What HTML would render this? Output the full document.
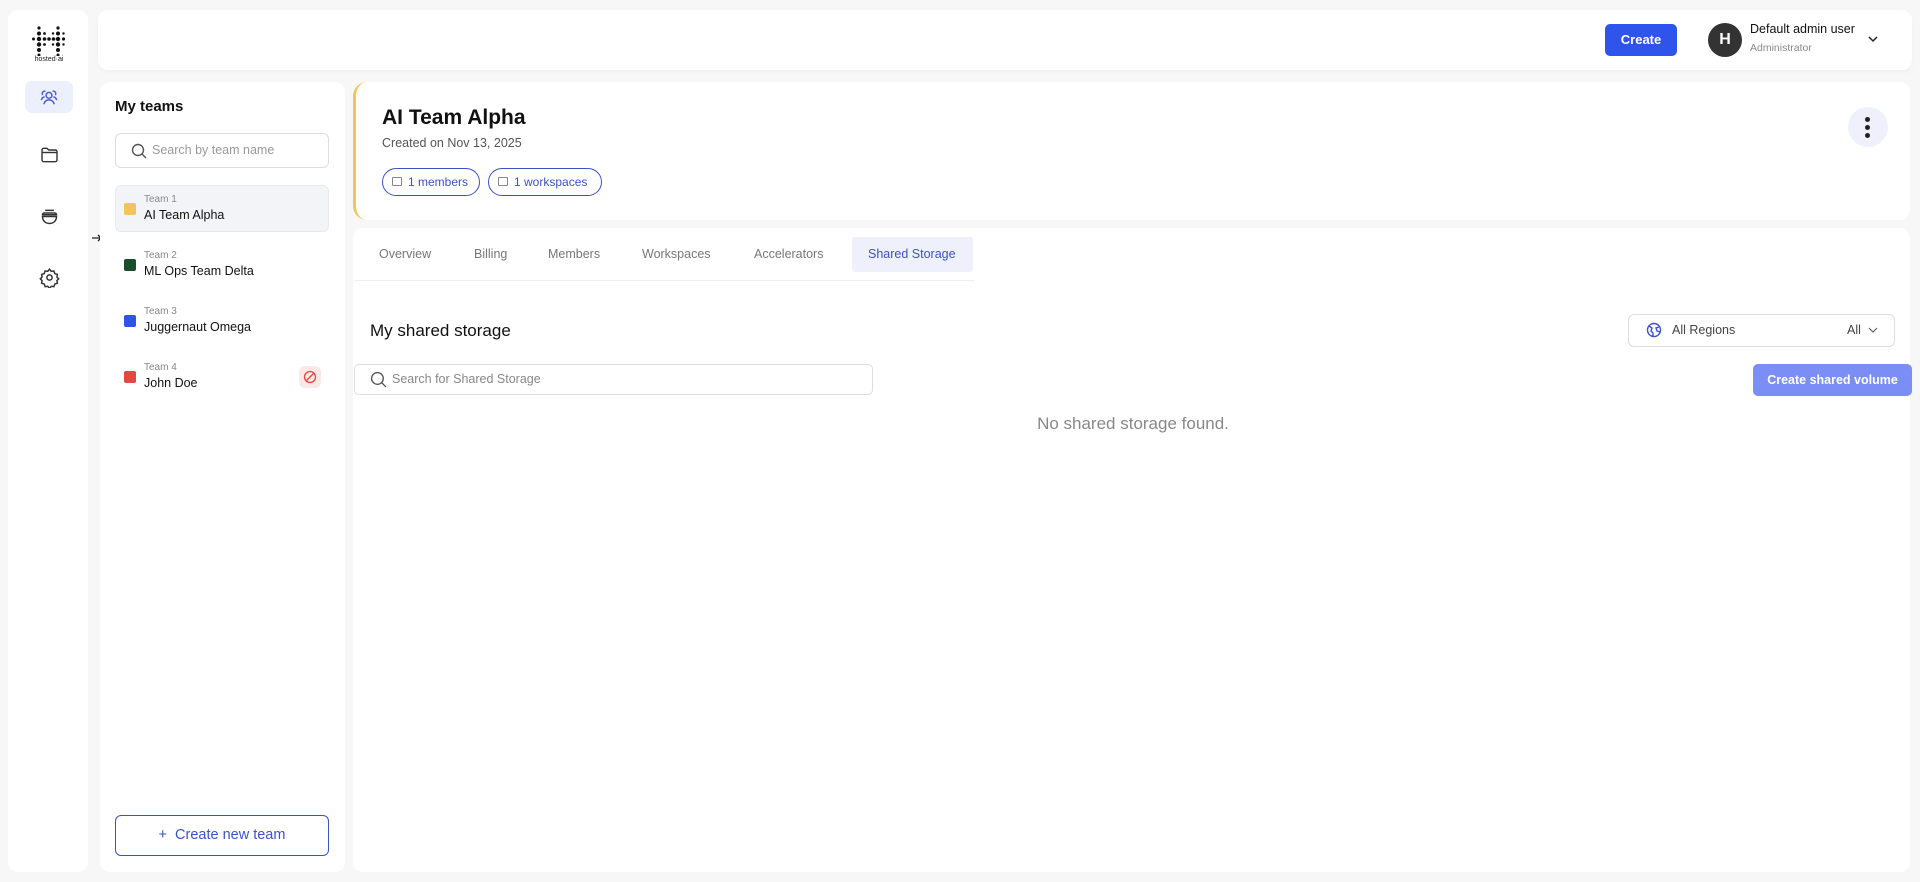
<!DOCTYPE html>
<html><head><meta charset="utf-8"><style>
*{box-sizing:border-box;margin:0;padding:0}
body{width:1920px;height:882px;background:#f7f7f8;font-family:"Liberation Sans",sans-serif;position:relative;overflow:hidden;color:#111}
.abs{position:absolute}
.card{position:absolute;background:#fff;border-radius:10px}
.ic{position:absolute}
</style></head><body>
<!-- rail -->
<div class="card" style="left:8px;top:10px;width:80px;height:862px;border-radius:10px"></div>
<svg class="ic" style="left:32px;top:26px" width="34" height="30" viewBox="0 0 34 30">
<g fill="#111">
<circle cx="7" cy="2" r="1.6"/><circle cx="7" cy="7.5" r="2"/><circle cx="7" cy="13" r="2.2"/><circle cx="7" cy="18.5" r="2.2"/><circle cx="7" cy="24" r="2"/><circle cx="7" cy="29" r="1.5"/>
<circle cx="1.5" cy="13" r="1.5"/><circle cx="12.5" cy="13" r="1.8"/><circle cx="12.5" cy="7.5" r="1.4"/><circle cx="12.5" cy="18.5" r="1.4"/>
<circle cx="17" cy="13" r="1.8"/><circle cx="21.5" cy="13" r="1.8"/>
<circle cx="26" cy="2" r="1.6"/><circle cx="26" cy="7.5" r="2"/><circle cx="26" cy="13" r="2.2"/><circle cx="26" cy="18.5" r="2.2"/><circle cx="26" cy="24" r="2"/><circle cx="26" cy="29" r="1.5"/>
<circle cx="31.5" cy="13" r="1.6"/><circle cx="31.5" cy="7.5" r="1.2"/><circle cx="31.5" cy="18.5" r="1.2"/><circle cx="21" cy="7.5" r="1.2"/><circle cx="21" cy="18.5" r="1.2"/>
</g></svg>
<div class="abs" style="left:28px;top:56px;width:42px;text-align:center;font-size:7px;color:#222">hosted·ai</div>
<div class="abs" style="left:25px;top:81px;width:48px;height:32px;background:#eceffc;border-radius:7px"></div>
<svg class="ic" style="left:39px;top:87px" width="20" height="20" viewBox="0 0 24 24" fill="none" stroke="#4a5bd4" stroke-width="1.8" stroke-linecap="round"><circle cx="12" cy="10" r="3.5"/><path d="M6 20c1-3 3.5-4.5 6-4.5s5 1.5 6 4.5"/><path d="M4 9a3 3 0 0 1 3-4M20 9a3 3 0 0 0-3-4M3 15c.5-1.5 1.5-2.5 3-3M21 15c-.5-1.5-1.5-2.5-3-3"/></svg>
<svg class="ic" style="left:39px;top:145px" width="21" height="20" viewBox="0 0 24 24" fill="none" stroke="#333" stroke-width="1.7" stroke-linejoin="round"><path d="M3 6a2 2 0 0 1 2-2h4l2 2h8a2 2 0 0 1 2 2v10a2 2 0 0 1-2 2H5a2 2 0 0 1-2-2z"/><path d="M3 9h18"/></svg>
<svg class="ic" style="left:39px;top:206px" width="21" height="21" viewBox="0 0 24 24" fill="none" stroke="#333" stroke-width="1.7"><path d="M7 5h10M6 8h12a2 2 0 0 1 2 2H4a2 2 0 0 1 2-2z"/><path d="M4 12h16c0 5-3.5 8-8 8s-8-3-8-8z"/></svg>
<svg class="ic" style="left:39px;top:267px" width="21" height="21" viewBox="0 0 24 24" fill="none" stroke="#333" stroke-width="1.7"><circle cx="12" cy="12" r="3"/><path d="M12 2.5l2 2.5 3-.5 1 3 3 1-.5 3 2 2-2 2 .5 3-3 1-1 3-3-.5-2 2.5-2-2.5-3 .5-1-3-3-1 .5-3-2-2 2-2-.5-3 3-1 1-3 3 .5z"/></svg>
<svg class="ic" style="left:91px;top:232px" width="16" height="12" viewBox="0 0 16 12" fill="none" stroke="#222" stroke-width="1.3"><path d="M1 6h9M7 3l3 3-3 3M13 1v10"/></svg>
<!-- header -->
<div class="card" style="left:98px;top:10px;width:1814px;height:60px;box-shadow:0 2px 6px rgba(0,0,0,.03)"></div>
<div class="abs" style="left:1605px;top:24px;width:72px;height:32px;background:#2f54eb;border-radius:5px;color:#fff;font-size:13px;font-weight:bold;text-align:center;line-height:32px">Create</div>
<div class="abs" style="left:1708px;top:23px;width:34px;height:34px;border-radius:50%;background:#333;color:#fff;font-weight:bold;font-size:16px;text-align:center;line-height:34px">H</div>
<div class="abs" style="left:1750px;top:22px;font-size:12.5px;color:#111">Default admin user</div>
<div class="abs" style="left:1750px;top:42px;font-size:10.5px;color:#888">Administrator</div>
<svg class="ic" style="left:1867px;top:35px" width="12" height="8" viewBox="0 0 12 8" fill="none" stroke="#222" stroke-width="1.5"><path d="M2 2l4 4 4-4"/></svg>
<!-- teams -->
<div class="card" style="left:100px;top:82px;width:245px;height:790px"></div>
<div class="abs" style="left:115px;top:98px;font-size:15px;font-weight:bold">My teams</div>
<div class="abs" style="left:115px;top:133px;width:214px;height:35px;border:1px solid #ddd;border-radius:6px"></div>
<svg class="ic" style="left:131px;top:143px" width="16" height="16" viewBox="0 0 16 16" fill="none" stroke="#555" stroke-width="1.4"><circle cx="7" cy="7" r="5.5"/><path d="M11 11l4 4"/></svg>
<div class="abs" style="left:152px;top:143px;font-size:12.5px;color:#999">Search by team name</div>
<div class="abs" style="left:115px;top:185px;width:214px;height:47px;background:#f3f4f8;border:1px solid #e8e9ee;border-radius:6px"></div>
<div class="abs" style="left:124px;top:203px;width:12px;height:12px;background:#f2c45a;border-radius:2px"></div>
<div class="abs" style="left:144px;top:194px;font-size:10px;color:#888">Team 1</div>
<div class="abs" style="left:144px;top:208px;font-size:12.5px;color:#111">AI Team Alpha</div>
<div class="abs" style="left:124px;top:259px;width:12px;height:12px;background:#1a4d2a;border-radius:2px"></div>
<div class="abs" style="left:144px;top:250px;font-size:10px;color:#888">Team 2</div>
<div class="abs" style="left:144px;top:264px;font-size:12.5px">ML Ops Team Delta</div>
<div class="abs" style="left:124px;top:315px;width:12px;height:12px;background:#2f54eb;border-radius:2px"></div>
<div class="abs" style="left:144px;top:306px;font-size:10px;color:#888">Team 3</div>
<div class="abs" style="left:144px;top:320px;font-size:12.5px">Juggernaut Omega</div>
<div class="abs" style="left:124px;top:371px;width:12px;height:12px;background:#e5483e;border-radius:2px"></div>
<div class="abs" style="left:144px;top:362px;font-size:10px;color:#888">Team 4</div>
<div class="abs" style="left:144px;top:376px;font-size:12.5px">John Doe</div>
<div class="abs" style="left:299px;top:366px;width:22px;height:22px;border-radius:6px;background:#fde8e8"></div>
<svg class="ic" style="left:303px;top:370px" width="14" height="14" viewBox="0 0 14 14" fill="none" stroke="#e5483e" stroke-width="1.3"><circle cx="7" cy="7" r="5.5"/><path d="M3 11l8-8"/></svg>
<div class="abs" style="left:115px;top:815px;width:214px;height:41px;border:1px solid #3b52c9;border-radius:6px;color:#3b52c9;font-size:14.5px;text-align:center;line-height:39px">+&nbsp; Create new team</div>
<!-- main header -->
<div class="card" style="left:353px;top:82px;width:1557px;height:138px;border-left:3px solid #f2c45a;border-radius:14px 10px 10px 14px"></div>
<div class="abs" style="left:382px;top:106px;font-size:21px;font-weight:bold">AI Team Alpha</div>
<div class="abs" style="left:382px;top:136px;font-size:12.5px;color:#555">Created on Nov 13, 2025</div>
<div class="abs" style="left:382px;top:168px;width:98px;height:28px;border:1px solid #3b52c9;border-radius:14px"></div>
<div class="abs" style="left:488px;top:168px;width:114px;height:28px;border:1px solid #3b52c9;border-radius:14px"></div>
<div class="abs" style="left:392px;top:177px;width:10px;height:9px;border:1px solid #888;border-radius:1px"></div>
<div class="abs" style="left:498px;top:177px;width:10px;height:9px;border:1px solid #888;border-radius:1px"></div>
<div class="abs" style="left:408px;top:175px;font-size:12px;color:#3b52c9">1 members</div>
<div class="abs" style="left:514px;top:175px;font-size:12px;color:#3b52c9">1 workspaces</div>
<div class="abs" style="left:1848px;top:107px;width:40px;height:40px;border-radius:50%;background:#eef0fb"></div>
<div class="abs" style="left:1865px;top:117px;width:5px;height:5px;border-radius:50%;background:#222"></div>
<div class="abs" style="left:1865px;top:125px;width:5px;height:5px;border-radius:50%;background:#222"></div>
<div class="abs" style="left:1865px;top:133px;width:5px;height:5px;border-radius:50%;background:#222"></div>
<!-- content -->
<div class="card" style="left:353px;top:228px;width:1557px;height:644px;background:#fff"></div>
<div class="abs" style="left:355px;top:280px;width:620px;height:1px;background:#eee"></div>
<div class="abs" style="left:852px;top:237px;width:121px;height:35px;background:#eef0fb;border-radius:3px"></div>
<div class="abs" style="top:247px;left:379px;font-size:12.5px;color:#777">Overview</div>
<div class="abs" style="top:247px;left:474px;font-size:12.5px;color:#777">Billing</div>
<div class="abs" style="top:247px;left:548px;font-size:12.5px;color:#777">Members</div>
<div class="abs" style="top:247px;left:642px;font-size:12.5px;color:#777">Workspaces</div>
<div class="abs" style="top:247px;left:754px;font-size:12.5px;color:#777">Accelerators</div>
<div class="abs" style="top:247px;left:868px;font-size:12.5px;color:#3b52c9">Shared Storage</div>
<div class="abs" style="left:370px;top:321px;font-size:17px">My shared storage</div>
<div class="abs" style="left:1628px;top:314px;width:267px;height:33px;border:1px solid #ddd;border-radius:6px"></div>
<svg class="ic" style="left:1646px;top:322px" width="16" height="16" viewBox="0 0 16 16" fill="none" stroke="#3b52c9" stroke-width="1.4"><circle cx="8" cy="8" r="6.5"/><path d="M3 4l3 2-1 3 2 2v3M13 5l-3 1 1 3 3 1"/></svg>
<div class="abs" style="left:1672px;top:323px;font-size:12.5px;color:#444">All Regions</div>
<div class="abs" style="left:1847px;top:323px;font-size:12.5px;color:#444">All</div>
<svg class="ic" style="left:1868px;top:327px" width="10" height="7" viewBox="0 0 10 7" fill="none" stroke="#666" stroke-width="1.2"><path d="M1 1l4 4 4-4"/></svg>
<div class="abs" style="left:354px;top:364px;width:519px;height:31px;border:1px solid #ddd;border-radius:5px"></div>
<svg class="ic" style="left:370px;top:371px" width="17" height="17" viewBox="0 0 16 16" fill="none" stroke="#555" stroke-width="1.3"><circle cx="7" cy="7" r="5.5"/><path d="M11 11l4 4"/></svg>
<div class="abs" style="left:392px;top:372px;font-size:12.5px;color:#888">Search for Shared Storage</div>
<div class="abs" style="left:1753px;top:364px;width:159px;height:32px;background:#7b8ef5;border-radius:5px;color:#fff;font-size:12.5px;font-weight:bold;text-align:center;line-height:32px">Create shared volume</div>
<div class="abs" style="left:933px;top:414px;width:400px;text-align:center;font-size:17px;color:#888">No shared storage found.</div>
</body></html>
